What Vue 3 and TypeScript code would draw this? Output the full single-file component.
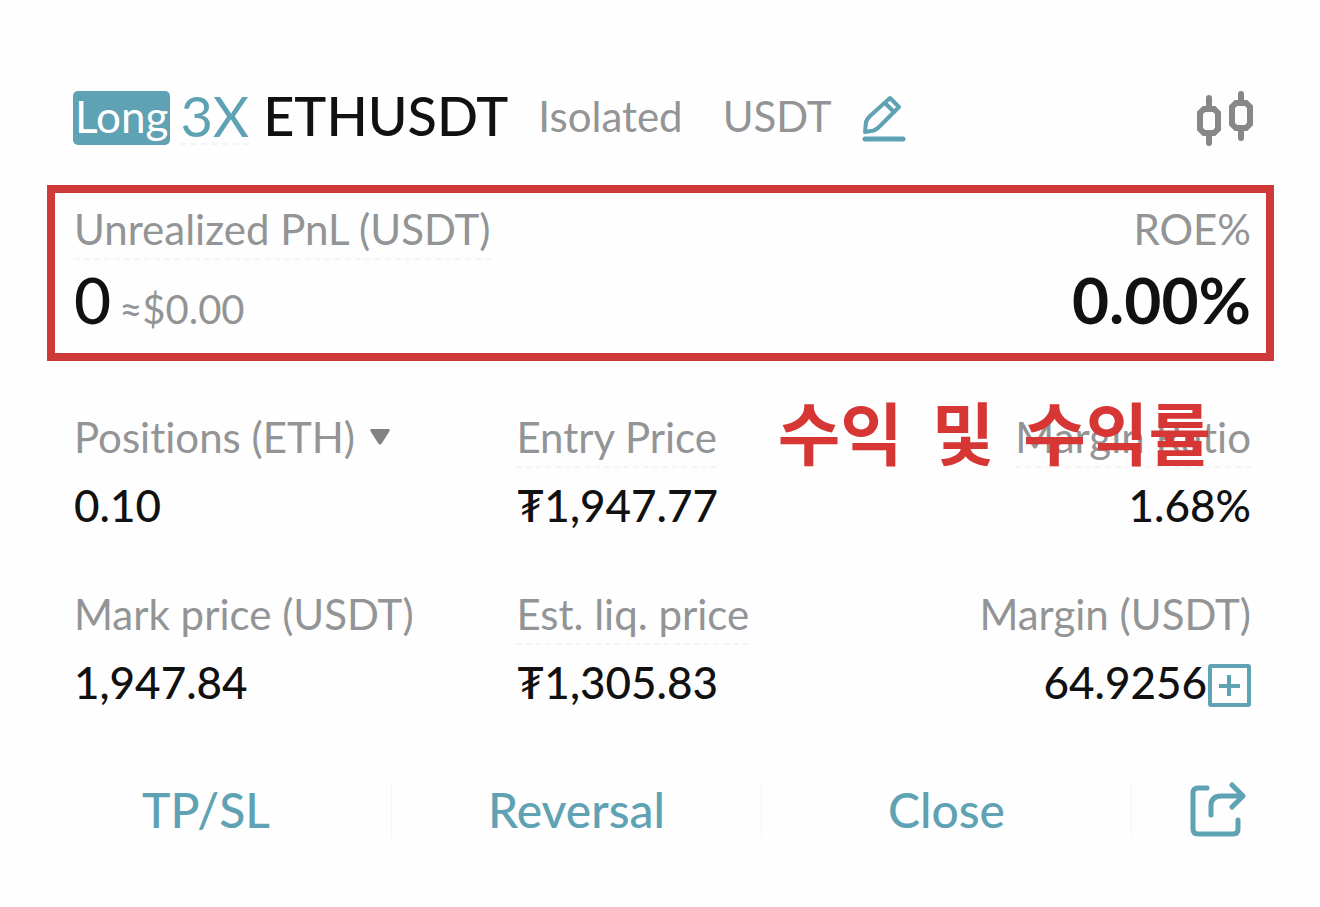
<script setup lang="ts">
interface Metric {
  id: string
  label: string
  value: string
  hinted?: boolean
  menu?: boolean
  addable?: boolean
}

const metrics: Metric[] = [
  { id: 'size', label: 'Positions (ETH)', value: '0.10', menu: true },
  { id: 'entry', label: 'Entry Price', value: '₮1,947.77', hinted: true },
  { id: 'ratio', label: 'Margin Ratio', value: '1.68%', hinted: true },
  { id: 'mark', label: 'Mark price (USDT)', value: '1,947.84' },
  { id: 'liq', label: 'Est. liq. price', value: '₮1,305.83', hinted: true },
  { id: 'margin', label: 'Margin (USDT)', value: '64.9256', addable: true },
]

const noteWords: string[] = ['수익', '및', '수익률']
const actions: string[] = ['TP/SL', 'Reversal', 'Close']
</script>

<template>
  <main class="card">
    <header class="head">
      <span class="side">Long</span>
      <button type="button" class="leverage">3X</button>
      <h1 class="pair">ETHUSDT</h1>
      <span class="mode">Isolated</span>
      <span class="asset">USDT</span>
      <button type="button" class="icon-btn edit" aria-label="Edit">
        <svg width="44" height="52" viewBox="0 0 44 52" fill="none" stroke="currentColor" stroke-width="4" stroke-linejoin="round" stroke-linecap="round">
          <path d="M3 41 4 31 C5 28 6 27 8 25 L28 7 37 16 18 35 C15 38 12 40 9 40 Z" />
          <path d="M23 12 32 21" />
          <path d="M3 48H41" stroke-width="5" />
        </svg>
      </button>
      <button type="button" class="icon-btn chart" aria-label="Chart">
        <svg width="60" height="56" viewBox="0 0 60 56" fill="none" stroke="currentColor" stroke-width="6">
          <path d="M15 7V16M15 44V52M47 3V11M47 39V47" stroke-linecap="round" />
          <path d="M10 18H20L24 22V38L20 42H10L6 38V22Z" />
          <path d="M42 12H52L56 16V33L52 37H42L38 33V16Z" />
        </svg>
      </button>
    </header>

    <section class="summary">
      <div class="pnl">
        <span class="label"><span class="hinted">Unrealized PnL (USDT)</span></span>
        <p class="big"><span>0</span><small>≈$0.00</small></p>
      </div>
      <div class="roe">
        <span class="label">ROE%</span>
        <p class="big strong">0.00%</p>
      </div>
      <p class="note"><span v-for="word in noteWords" :key="word">{{ word }}</span></p>
    </section>

    <dl class="metrics">
      <div v-for="m in metrics" :key="m.id" class="metric">
        <dt class="label">
          <button v-if="m.menu" type="button" class="menu">
            {{ m.label }}
            <svg width="22" height="18" viewBox="0 0 22 18" fill="currentColor"><path d="M3 1H19Q22 1 20 4L13 15Q11 18 9 15L2 4Q0 1 3 1Z" /></svg>
          </button>
          <span v-else :class="{ hinted: m.hinted }">{{ m.label }}</span>
        </dt>
        <dd class="value">
          {{ m.value }}
          <button v-if="m.addable" type="button" class="icon-btn add" aria-label="Add margin">
            <svg width="44" height="46" viewBox="0 0 44 46" fill="none" stroke="currentColor" stroke-width="4">
              <rect x="3" y="2" width="39" height="39" rx="1" />
              <path d="M12 22H33M22 11V32" />
            </svg>
          </button>
        </dd>
      </div>
    </dl>

    <footer class="actions">
      <button v-for="a in actions" :key="a" type="button" class="action">{{ a }}</button>
      <button type="button" class="action share" aria-label="Share">
        <svg width="56" height="56" viewBox="0 0 56 56" fill="none" stroke="currentColor" stroke-width="5" stroke-linecap="round" stroke-linejoin="round">
          <path d="M17 6H8Q3 6 3 11V47Q3 52 8 52H43Q48 52 48 47V38" />
          <path d="M21 33V24Q21 14 31 14H52" />
          <path d="M42 3 53 14 42 25" />
        </svg>
      </button>
    </footer>
  </main>
</template>

<style>
body {
  margin: 0;
  background: #fefefe;
}
</style>

<style scoped>
.card {
  padding: 91px 46px 70px 47px;
  font-family: Lato, 'Noto Sans', 'Noto Sans CJK KR', sans-serif;
  font-variant-ligatures: none;
  color: #111;
}

button {
  padding: 0;
  border: 0;
  background: none;
  font: inherit;
  font-variant-ligatures: inherit;
  color: inherit;
  cursor: pointer;
}

svg {
  display: block;
}

.head {
  display: flex;
  align-items: flex-start;
  padding: 0 20px 0 26px;
  line-height: 50px;
  font-size: 42px;
  color: #929495;
}

.side {
  padding: 0 2px 4px;
  border-radius: 5px;
  background: #5fa2b4;
  font-size: 44px;
  color: #fff;
}

.head .leverage {
  margin-left: 10px;
  padding-bottom: 2px;
  border-bottom: 2px dashed #f4f4f4;
  font-size: 56px;
  line-height: 50px;
  color: #5fa2b4;
}

.pair {
  margin: 0 0 0 14px;
  font-size: 54px;
  line-height: 50px;
  font-weight: 500;
  color: #111;
}

.mode {
  margin-left: 30px;
}

.asset {
  margin-left: 40px;
}

.icon-btn {
  flex: none;
  color: #5fa2b4;
}

.edit {
  margin-left: 30px;
}

.head .chart {
  margin-left: auto;
  color: #858788;
}

.summary {
  position: relative;
  display: flex;
  justify-content: space-between;
  margin-top: 38px;
  padding: 11px 15px 8px 19px;
  border: 8px solid #cd3a37;
}

.label {
  display: block;
  font-size: 42px;
  line-height: 50px;
  white-space: nowrap;
  color: #929495;
}

.hinted {
  display: inline-block;
  margin-bottom: -6px;
  padding-bottom: 4px;
  border-bottom: 2px dashed #f5f5f5;
}

.big {
  display: flex;
  align-items: baseline;
  gap: 8px;
  margin: 10px 0 0;
  font-size: 64px;
  line-height: 72px;
  font-weight: 500;
}

.big small {
  font-size: 40px;
  font-weight: 400;
  color: #929495;
}

.strong {
  font-weight: 700;
}

.roe {
  text-align: right;
}

.note {
  position: absolute;
  z-index: 1;
  top: 188px;
  right: 55px;
  display: flex;
  gap: 29px;
  margin: 0;
  font-family: 'Noto Sans CJK KR', sans-serif;
  font-size: 68px;
  line-height: 100px;
  font-weight: 700;
  white-space: nowrap;
  color: #d63734;
}

.metrics {
  display: grid;
  grid-template-columns: 442fr 367fr 367fr;
  row-gap: 56px;
  margin: 51px 0 0;
  padding: 0 23px 0 27px;
}

.metric:nth-child(3n) {
  justify-self: end;
  text-align: right;
}

.menu {
  display: flex;
  align-items: center;
  gap: 14px;
}

.menu svg {
  color: #808283;
}

.value {
  display: flex;
  align-items: flex-end;
  margin: 15px 0 0;
  font-size: 44px;
  line-height: 56px;
  font-weight: 500;
}

.metric:nth-child(3n) .value {
  justify-content: flex-end;
}

.actions {
  display: grid;
  grid-template-columns: 1fr 1fr 1fr 172px;
  margin: 72px -29px 0 -26px;
}

.action {
  display: flex;
  align-items: center;
  justify-content: center;
  font-size: 48px;
  line-height: 56px;
  font-weight: 500;
  color: #5fa2b4;
}

.action + .action {
  border-left: 1px solid #f5f5f5;
}
</style>
